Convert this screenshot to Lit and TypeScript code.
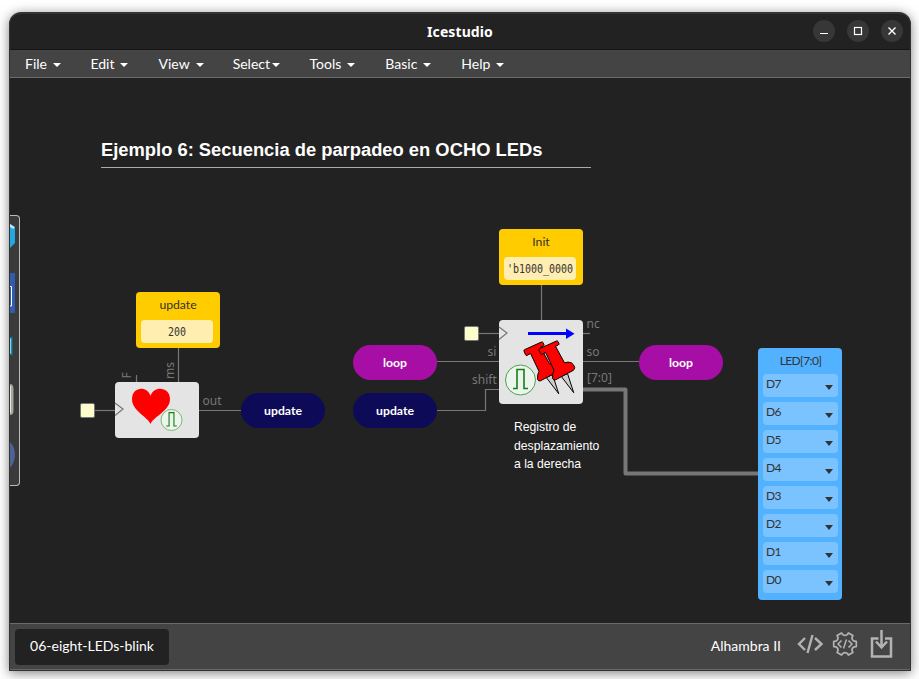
import { LitElement, html, svg, css } from "lit";
import { customElement } from "lit/decorators.js";
import { styleMap } from "lit/directives/style-map.js";

interface Menu { name: string; gap: number; after: number; }
interface Box { x: number; y: number; w: number; h: number; }

/* Diagram coordinates are window-relative; the canvas starts at this point. */
const ORIGIN = { x: 10, y: 78 };

const MENUS: Menu[] = [
  { name: "File", gap: 6, after: 29.5 },
  { name: "Edit", gap: 6, after: 30 },
  { name: "View", gap: 6, after: 29 },
  { name: "Select", gap: 1.5, after: 30 },
  { name: "Tools", gap: 6, after: 30 },
  { name: "Basic", gap: 6, after: 30 },
  { name: "Help", gap: 6, after: 0 },
];

const CONSTANTS = [
  { name: "update", value: "200", x: 136, y: 292, w: 84, h: 56 },
  { name: "Init", value: "'b1000_0000", x: 499, y: 229, w: 84, h: 56 },
];

const LABELS = [
  { name: "update", kind: "navy", x: 241, y: 393, w: 84, h: 35 },
  { name: "loop", kind: "fuchsia", x: 353, y: 345, w: 84, h: 35 },
  { name: "update", kind: "navy", x: 353, y: 393, w: 84, h: 35 },
  { name: "loop", kind: "fuchsia", x: 639, y: 345, w: 84, h: 35 },
];

const PINS = ["D7", "D6", "D5", "D4", "D3", "D2", "D1", "D0"];

const WIRES = [
  "M178.500 348V382", "M136.500 375V382", "M95 410.500H115", "M199 410.500H241",
  "M541.500 285V320", "M479 333.500H499", "M583 333.500H590",
  "M437 361.500H499", "M583 361.500H639", "M437 410.500H485.500V389.500H499",
];

const PORTS = [
  { t: "out", x: 202.5, y: 405 },
  { t: "si", x: 487.5, y: 356 },
  { t: "shift", x: 472, y: 384 },
  { t: "nc", x: 586.5, y: 328 },
  { t: "so", x: 586.5, y: 356 },
  { t: "[7:0]", x: 587, y: 382 },
];

/* Outline of a six-toothed gear centred on the given point. */
const gear = (cx: number, cy: number): string => {
  const at = (deg: number, r: number) => {
    const a = (deg * Math.PI) / 180;
    return `${(cx + r * Math.cos(a)).toFixed(2)} ${(cy + r * Math.sin(a)).toFixed(2)}`;
  };
  const parts: string[] = [];
  for (let i = 0; i < 6; i++) {
    const d = i * 60;
    parts.push(`${i ? "L" : "M"}${at(d - 13, 11.6)}L${at(d + 13, 11.6)}L${at(d + 17, 9.6)}Q${at(d + 30, 7.8)} ${at(d + 43, 9.6)}`);
  }
  return parts.join("") + "Z";
};

const place = (b: Box) =>
  styleMap({
    left: `${b.x - ORIGIN.x}px`,
    top: `${b.y - ORIGIN.y}px`,
    width: `${b.w}px`,
    height: `${b.h}px`,
  });

@customElement("ice-menubar")
class IceMenubar extends LitElement {
  static styles = css`
    :host { display: flex; height: 27px; padding: 0 15px; align-items: center;
      background: #444; border-bottom: 1px solid #6b6b6b; color: #fff;
      font: 14px/20px Lato, sans-serif; }
    .item { display: flex; align-items: center; }
    .caret { width: 0; height: 0; margin-top: 2px; border: 4px solid transparent; border-top-color: #fff; border-bottom: 0; }
  `;
  render() {
    return MENUS.map((m) => html`<div class="item" style=${styleMap({ marginRight: `${m.after}px` })}>${m.name}<span class="caret" style=${styleMap({ marginLeft: `${m.gap}px` })}></span></div>`);
  }
}

@customElement("ice-canvas")
class IceCanvas extends LitElement {
  static styles = css`
    :host { display: block; position: relative; overflow: hidden; background: #222; font-family: Lato, sans-serif; }
    .wires, .art { position: absolute; left: 0; top: 0; width: 900px; height: 545px; }
    .port { font: 12px "Noto Sans", sans-serif; fill: #777; }
    .title { position: absolute; left: 91px; top: 58px; width: 490px; height: 31px; border-bottom: 1px solid #aaa;
      color: #fff; font: bold 18.350px/27px "Liberation Sans", sans-serif; white-space: nowrap; }
    .note { position: absolute; left: 504px; top: 340px; color: #fff; font: 12.200px/18.500px "Liberation Sans", sans-serif; }
    .const { position: absolute; box-sizing: border-box; display: flex; flex-direction: column; align-items: center;
      padding: 5px 5px; border-radius: 4px; background: #fc0; color: #333; font-size: 12.200px; line-height: 16px; }
    .value { box-sizing: border-box; width: 72px; height: 23px; margin: 7px 2px 0 0; border-radius: 4px; background: #ffeeb0;
      font: 10px/23px "DejaVu Sans Mono", monospace; text-align: center; white-space: nowrap; }
    .digits { display: block; transform: scaleY(1.15); }
    .pill { position: absolute; display: flex; align-items: center; justify-content: center; border-radius: 18px;
      color: #fff; font-weight: bold; font-size: 12.200px; }
    .navy { background: #0d0b58; }
    .fuchsia { background: #a60ea6; }
    .block { position: absolute; border-radius: 4px; background: #e4e4e4; }
    .clock { position: absolute; box-sizing: border-box; border: 1px solid #777; border-radius: 2px; background: #fdfdcb; }
    .leds { position: absolute; box-sizing: border-box; display: flex; flex-direction: column; gap: 5px; padding: 0 4px 0 5px;
      border-radius: 4px; background: #52b2ff; color: #333; font-size: 12px; }
    .head { height: 21px; line-height: 26px; text-align: center; letter-spacing: -0.600px; }
    .pin { display: flex; justify-content: space-between; height: 23px; padding: 0 5px 0 3px; border-radius: 4px; background: #7ac3ff; line-height: 20px; letter-spacing: -0.600px; }
    .arrow { width: 0; height: 0; margin-top: 11px; border: 4px solid transparent; border-top: 5px solid #333; border-bottom: 0; }
    .toolbox { position: absolute; box-sizing: border-box; left: 0; top: 137px; width: 10px; height: 271px; overflow: hidden;
      border: 1px solid #bbb; border-left: 0; border-radius: 0 4px 4px 0; background: #3a3a3a; }
    .tools { display: block; }
  `;
  pulse(x: number, y: number, s: number) {
    return svg`<g transform="translate(${x} ${y}) scale(${s})" fill="none" stroke="#168016">
      <circle r="15" fill="#edf3ed" stroke="#48a448" stroke-width="1"/>
      <path d="M-7.500 8.500H-3.500V-10.500H3.500V8.500H7.500" stroke-width="1.600"/></g>`;
  }
  pushpin(dx: number, dy: number) {
    return svg`<g transform="translate(${dx} ${dy})" stroke="#000" stroke-width="1" stroke-linejoin="round">
      <path d="M561.300 376.500L567.500 373.500L573.700 392.700Z" fill="#ccc"/>
      <path d="M539 350Q538.500 349.200 539.500 348.700L556.500 341Q557.500 340.700 558 341.500L559 343.500Q559.200 344.500 558.300 345L555.500 346.300L564.500 362.800Q568 361.500 571.300 362.700Q574 364.500 574.700 367.500Q574.800 369.500 573 370.500L555.500 379.800Q553.500 380.500 552.600 378.500Q552 374 554 370.300L545.500 352.500L541.800 354.500Q540.800 354.500 540.400 353.500Z" fill="#f00"/></g>`;
  }
  render() {
    return html`
      <div class="title">Ejemplo 6: Secuencia de parpadeo en OCHO LEDs</div>
      <svg class="wires" viewBox="10 78 900 545">
        <g fill="none" stroke="#777" stroke-width="1.200">${WIRES.map((d) => svg`<path d=${d}/>`)}</g>
        <path d="M583 389.500H625.500V473.500H758" fill="none" stroke="#777" stroke-width="4" stroke-linejoin="round"/>
        ${PORTS.map((p) => svg`<text class="port" x=${p.x} y=${p.y}>${p.t}</text>`)}
        <text class="port" transform="translate(131 378.500) rotate(-90)">F</text>
        <text class="port" transform="translate(173.500 379) rotate(-90)">ms</text>
      </svg>
      ${CONSTANTS.map((c) => html`<div class="const" style=${place(c)}>${c.name}<div class="value"><span class="digits">${c.value}</span></div></div>`)}
      ${LABELS.map((l) => html`<div class="pill ${l.kind}" style=${place(l)}>${l.name}</div>`)}
      <div class="clock" style=${place({ x: 80, y: 403, w: 15, h: 15 })}></div>
      <div class="clock" style=${place({ x: 464, y: 326, w: 15, h: 15 })}></div>
      <div class="block" style=${place({ x: 115, y: 382, w: 84, h: 56 })}></div>
      <div class="block" style=${place({ x: 499, y: 320, w: 84, h: 84 })}></div>
      <svg class="art" viewBox="10 78 900 545">
        <path d="M115 403L123 409L115 415.500M499 327L507 333L499 339.500" fill="none" stroke="#777" stroke-width="1.200"/>
        <path d="M150.500 424C147 416 132 411 132 399C132 387 147 385 150.500 396C154 385 170 387 170 399C170 411 154 416 150.500 424Z" fill="#f00"/>
        ${this.pulse(171.5, 420, 0.7)}
        ${this.pulse(520.5, 380, 1)}
        <path d="M528 333.500H567" stroke="#00f" stroke-width="3"/>
        <path d="M566 328.500L574.500 333.800L566 339Z" fill="#00f"/>
        ${this.pushpin(-15, 1)}
        ${this.pushpin(0, 0)}
      </svg>
      <div class="note">Registro de<br>desplazamiento<br>a la derecha</div>
      <div class="leds" style=${place({ x: 758, y: 348, w: 84, h: 252 })}>
        <div class="head">LED[7:0]</div>
        ${PINS.map((p) => html`<div class="pin">${p}<span class="arrow"></span></div>`)}
      </div>
      <div class="toolbox">
        <svg class="tools" width="9" height="269" viewBox="10 216 9 269">
          <path d="M10 224L15 228V243L10 248Z" fill="#22a7e0"/><path d="M10 224L15 227L13 229L10 227Z" fill="#b9e6fa"/>
          <rect x="10" y="273" width="5" height="40" fill="#315baf"/><path d="M10 286.500H11.500V306H10" fill="none" stroke="#fff"/>
          <path d="M10 337.500H12V354.500H10" fill="#79d3ea" stroke="#176b86" stroke-width="1.500"/>
          <path d="M10 384Q13.500 384 13.500 389V411Q13.500 415 10 415Z" fill="#a5a49d"/><path d="M10.500 386V413" stroke="#e6e6df"/>
          <path d="M10 442Q15 447 15 455Q15 462 10 468Z" fill="#4b6493"/>
        </svg>
      </div>`;
  }
}

@customElement("ice-footer")
class IceFooter extends LitElement {
  static styles = css`
    :host { display: flex; box-sizing: border-box; height: 47px; align-items: center; padding: 0 17px 0 5px;
      border-top: 1px solid #6b6b6b; border-bottom: 1px solid #666; background: #444; color: #fff; font: 14px/20px Lato, sans-serif; }
    .tab { box-sizing: border-box; width: 154px; height: 36px; border-radius: 4px; background: #222; line-height: 34px; text-align: center; }
    .board { margin-left: auto; margin-right: 16px; padding-bottom: 2px; }
    .icons { display: block; margin-bottom: 5px; }
  `;
  render() {
    return html`<div class="tab">06-eight-LEDs-blink</div>
      <span class="board">Alhambra II</span>
      <svg class="icons" width="96" height="32" viewBox="797 628 96 32" fill="none" stroke="#b3b3b3">
        <path d="M805 638L799 644L805 650M815 638L821.500 644L815 650M812.500 635L807.500 653" stroke-width="2.400"/>
        <path d=${gear(845, 644)} stroke-width="1.700" stroke-linejoin="round"/>
        <path d="M841.500 640.500L838 644L841.500 647.500M848.500 640.500L852 644L848.500 647.500M846.500 639.500L843.500 648.500" stroke-width="1.500"/>
        <path d="M878.500 638.500H872V656.500H891V638.500H885M881.500 630V647M876 641.500L881.500 647.500L887 641.500" stroke-width="2.500"/>
      </svg>`;
  }
}

@customElement("app-root")
class AppRoot extends LitElement {
  static styles = css`
    :host { display: block; box-sizing: border-box; width: 919px; height: 679px; padding: 12px 8px 8px 9px; overflow: hidden; background: #fff; }
    .window { display: flex; flex-direction: column; box-sizing: border-box; width: 902px; height: 659px; overflow: hidden;
      border: 1px solid #333; border-top-width: 2px; border-radius: 12px 12px 0 0; background: #222;
      box-shadow: 0 2px 12px rgba(0, 0, 0, 0.5); }
    .bar { display: grid; grid-template-columns: 1fr auto 1fr; align-items: center; box-sizing: border-box; height: 36px; flex: none;
      padding: 0 7px 0 7px; border-bottom: 1px solid #151515; color: #fff; font: bold 14px/20px "Noto Sans", sans-serif; }
    .name { grid-column: 2; letter-spacing: 0.100px; }
    .buttons { display: flex; justify-content: flex-end; gap: 12px; margin-top: -2px; }
    .btn { width: 22px; height: 22px; border-radius: 50%; background: #373737; fill: none; stroke: #fff; }
    .canvas { flex: 1; }
    ice-menubar, ice-footer { flex: none; }
  `;
  render() {
    return html`<div class="window">
      <div class="bar">
        <span class="name">Icestudio</span>
        <div class="buttons">
          <svg class="btn" viewBox="0 0 22 22"><path d="M7 13.500H15"/></svg>
          <svg class="btn" viewBox="0 0 22 22"><rect x="7.500" y="7.500" width="7" height="7" stroke-width="1.200"/></svg>
          <svg class="btn" viewBox="0 0 22 22"><path d="M7.500 7.500L14.500 14.500M14.500 7.500L7.500 14.500" stroke-width="1.400"/></svg>
        </div>
      </div>
      <ice-menubar></ice-menubar>
      <ice-canvas class="canvas"></ice-canvas>
      <ice-footer></ice-footer>
    </div>`;
  }
}
